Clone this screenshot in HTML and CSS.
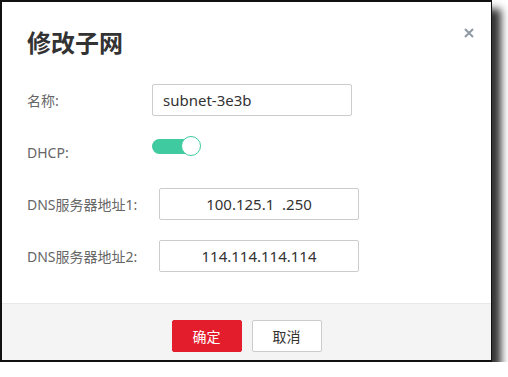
FILE: index.html
```html
<!DOCTYPE html>
<html lang="zh-CN">
<head>
    <meta charset="UTF-8">
    <meta name="viewport" content="width=device-width, initial-scale=1.0">
    <title>修改子网</title>
    <link rel="stylesheet" href="styles.css">
</head>
<body>
    <div class="dialog">
        <div class="dialog-head">
            <h1>修改子网</h1>
            <span class="close">
                <svg width="10" height="10" viewBox="0 0 10 10">
                    <path d="M1 1 L9 9 M9 1 L1 9" stroke="#8e99a3" stroke-width="2" fill="none"/>
                </svg>
            </span>
        </div>

        <div class="dialog-body">
            <div class="row">
                <label>名称:</label>
                <input class="field" type="text" value="subnet-3e3b">
            </div>
            <div class="row row-top">
                <label>DHCP:</label>
                <span class="switch on"><span class="knob"></span></span>
            </div>
            <div class="row">
                <label class="label-dns">DNS服务器地址1:</label>
                <input class="field center" type="text" value="100.125.1  .250">
            </div>
            <div class="row">
                <label class="label-dns">DNS服务器地址2:</label>
                <input class="field center" type="text" value="114.114.114.114">
            </div>
        </div>

        <div class="dialog-foot">
            <button class="btn btn-primary">确定</button>
            <button class="btn">取消</button>
        </div>
    </div>
</body>
</html>
```

FILE: styles.css
```css
body {
    margin: 0;
    background-color: #fff;
    font-family: "Noto Sans", "Noto Sans CJK SC", sans-serif;
    color: #333;
}
.dialog {
    width: 492px;
    height: 362px;
    box-sizing: border-box;
    border: 2px solid #111;
    border-right-width: 1px;
    background-color: #fff;
    box-shadow: 9px 9px 8px rgba(0,0,0,0.8);
    display: flex;
    flex-direction: column;
}
.dialog-head {
    display: flex;
    justify-content: space-between;
    align-items: flex-start;
    padding: 23px 17px 0 25px;
}
.dialog-head h1 {
    margin: 0;
    font-size: 24px;
    font-weight: bold;
    line-height: 36px;
    color: #333;
}
.close {
    margin-top: -4px;
}
.dialog-body {
    flex: 1;
    padding: 23px 25px 0;
    display: flex;
    flex-direction: column;
    gap: 20px;
}
.row {
    display: flex;
    align-items: center;
    height: 32px;
}
.row label {
    width: 125px;
    flex-shrink: 0;
    font-size: 14px;
    color: #666;
}
.row .label-dns {
    width: 132px;
}
.row-top .switch {
    align-self: flex-start;
}
.field {
    width: 200px;
    height: 32px;
    box-sizing: border-box;
    border: 1px solid #ccc;
    border-radius: 2px;
    padding: 0 10px;
    font-family: inherit;
    font-size: 15px;
    color: #333;
    outline: none;
}
.field.center {
    text-align: center;
}
.switch {
    position: relative;
    display: inline-block;
    width: 49px;
    height: 20px;
}
.switch::before {
    content: "";
    position: absolute;
    left: 0;
    top: 3px;
    width: 44px;
    height: 15px;
    border-radius: 8px;
    background-color: #3fcaa0;
}
.switch .knob {
    position: absolute;
    right: 0;
    top: 0;
    width: 18px;
    height: 18px;
    border-radius: 50%;
    background-color: #fff;
    border: 1px solid #3fcaa0;
}
.dialog-foot {
    height: 57px;
    box-sizing: border-box;
    border-top: 1px solid #e8e8e8;
    background-color: #f4f4f4;
    display: flex;
    justify-content: center;
    align-items: flex-start;
    gap: 10px;
    padding-top: 16px;
}
.btn {
    width: 70px;
    height: 32px;
    border: 1px solid #ccc;
    border-radius: 2px;
    background-color: #fff;
    font-family: inherit;
    font-size: 14px;
    color: #333;
}
.btn-primary {
    border-color: #e41d2d;
    background-color: #e41d2d;
    color: #fff;
}
```
